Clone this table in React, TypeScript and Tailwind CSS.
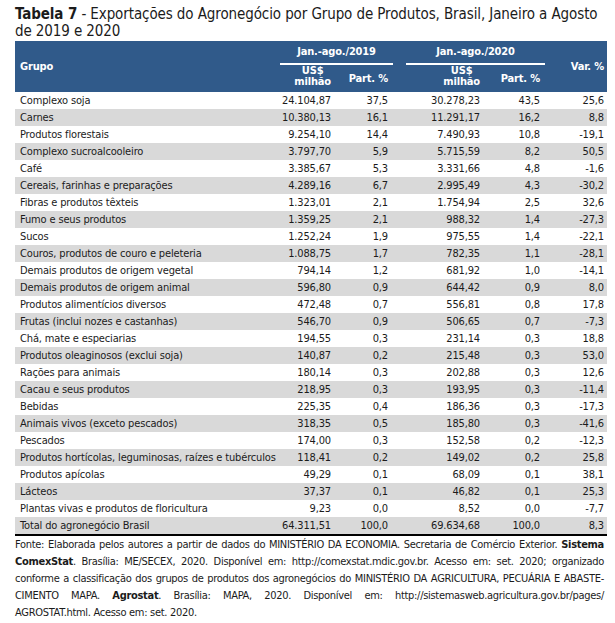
const rows: [string, string, string, string, string, string][] = [
  ["Complexo soja", "24.104,87", "37,5", "30.278,23", "43,5", "25,6"],
  ["Carnes", "10.380,13", "16,1", "11.291,17", "16,2", "8,8"],
  ["Produtos florestais", "9.254,10", "14,4", "7.490,93", "10,8", "-19,1"],
  ["Complexo sucroalcooleiro", "3.797,70", "5,9", "5.715,59", "8,2", "50,5"],
  ["Café", "3.385,67", "5,3", "3.331,66", "4,8", "-1,6"],
  ["Cereais, farinhas e preparações", "4.289,16", "6,7", "2.995,49", "4,3", "-30,2"],
  ["Fibras e produtos têxteis", "1.323,01", "2,1", "1.754,94", "2,5", "32,6"],
  ["Fumo e seus produtos", "1.359,25", "2,1", "988,32", "1,4", "-27,3"],
  ["Sucos", "1.252,24", "1,9", "975,55", "1,4", "-22,1"],
  ["Couros, produtos de couro e peleteria", "1.088,75", "1,7", "782,35", "1,1", "-28,1"],
  ["Demais produtos de origem vegetal", "794,14", "1,2", "681,92", "1,0", "-14,1"],
  ["Demais produtos de origem animal", "596,80", "0,9", "644,42", "0,9", "8,0"],
  ["Produtos alimentícios diversos", "472,48", "0,7", "556,81", "0,8", "17,8"],
  ["Frutas (inclui nozes e castanhas)", "546,70", "0,9", "506,65", "0,7", "-7,3"],
  ["Chá, mate e especiarias", "194,55", "0,3", "231,14", "0,3", "18,8"],
  ["Produtos oleaginosos (exclui soja)", "140,87", "0,2", "215,48", "0,3", "53,0"],
  ["Rações para animais", "180,14", "0,3", "202,88", "0,3", "12,6"],
  ["Cacau e seus produtos", "218,95", "0,3", "193,95", "0,3", "-11,4"],
  ["Bebidas", "225,35", "0,4", "186,36", "0,3", "-17,3"],
  ["Animais vivos (exceto pescados)", "318,35", "0,5", "185,80", "0,3", "-41,6"],
  ["Pescados", "174,00", "0,3", "152,58", "0,2", "-12,3"],
  ["Produtos hortícolas, leguminosas, raízes e tubérculos", "118,41", "0,2", "149,02", "0,2", "25,8"],
  ["Produtos apícolas", "49,29", "0,1", "68,09", "0,1", "38,1"],
  ["Lácteos", "37,37", "0,1", "46,82", "0,1", "25,3"],
  ["Plantas vivas e produtos de floricultura", "9,23", "0,0", "8,52", "0,0", "-7,7"],
]

const total = ["Total do agronegócio Brasil", "64.311,51", "100,0", "69.634,68", "100,0", "8,3"]

function DataRow({ r, gray, isTotal }: { r: string[]; gray: boolean; isTotal?: boolean }) {
  return (
    <div
      className={`grid grid-cols-[263px_58px_64px_84px_64px_59px] h-[17px] leading-[17px] ${
        gray ? "bg-[#d9d9d9]" : "bg-white"
      } ${isTotal ? "border-b-2 border-black box-content" : ""}`}
    >
      <div className="pl-[5px] whitespace-nowrap overflow-hidden">{r[0]}</div>
      <div className="text-right pr-[5px]">{r[1]}</div>
      <div className="text-right pr-[12px]">{r[2]}</div>
      <div className="text-right pr-[4px]">{r[3]}</div>
      <div className="text-right pr-[8px]">{r[4]}</div>
      <div className="text-right pr-[3px]">{r[5]}</div>
    </div>
  )
}

function UsdHead({ pr }: { pr: string }) {
  return (
    <div className={`flex justify-end ${pr}`}>
      <div className="text-center leading-[11px]">
        US$
        <br />
        milhão
      </div>
    </div>
  )
}

export default function App() {
  return (
    <div className="w-[615px] h-[623px] overflow-hidden bg-white text-[#1b1b1b] px-[15px] pt-[6px] font-['DejaVu_Sans_Condensed','DejaVu_Sans',sans-serif] text-[11px] tracking-[-0.15px] leading-[17px]">
      {/* Título */}
      <h1 className="text-[15px] leading-[17px] tracking-[-0.1px] w-[592px]">
        <span className="font-bold">Tabela 7</span> - Exportações do Agronegócio por Grupo de Produtos, Brasil, Janeiro a Agosto de 2019 e 2020
      </h1>

      <div className="mt-px w-[592px]">
        {/* Cabeçalho */}
        <div className="flex h-[51px] bg-[#305a8a] text-white font-bold">
          <div className="w-[263px] flex items-center pl-[5px]">Grupo</div>
          <div className="w-[122px] flex flex-col">
            <div className="h-[24px] pt-px">
              <div className="ml-[2px] mr-[7px] h-[23px] border-b-2 border-white text-center leading-[20px]">
                Jan.-ago./2019
              </div>
            </div>
            <div className="flex flex-1">
              <div className="w-[58px]">
                <UsdHead pr="pr-[5px]" />
              </div>
              <div className="w-[64px] flex items-center justify-end pr-[12px]">Part. %</div>
            </div>
          </div>
          <div className="w-[148px] flex flex-col">
            <div className="h-[24px] pt-px">
              <div className="ml-[6px] mr-[3px] h-[23px] border-b-2 border-white text-center leading-[20px]">
                Jan.-ago./2020
              </div>
            </div>
            <div className="flex flex-1">
              <div className="w-[84px]">
                <UsdHead pr="pr-[4px]" />
              </div>
              <div className="w-[64px] flex items-center justify-end pr-[8px]">Part. %</div>
            </div>
          </div>
          <div className="w-[59px] flex items-center justify-end pr-[3px]">Var. %</div>
        </div>

        {/* Linhas */}
        {rows.map((r, i) => (
          <DataRow key={r[0]} r={r} gray={i % 2 === 1} />
        ))}
        <DataRow r={total} gray isTotal />
      </div>

      {/* Fonte */}
      <div className="w-[589px] tracking-[-0.3px]">
        <div className="text-justify [text-align-last:justify]">
          Fonte: Elaborada pelos autores a partir de dados do MINISTÉRIO DA ECONOMIA. Secretaria de Comércio Exterior. <b>Sistema</b>
        </div>
        <div className="text-justify [text-align-last:justify]">
          <b>ComexStat</b>. Brasília: ME/SECEX, 2020. Disponível em: http://comexstat.mdic.gov.br. Acesso em: set. 2020; organizado
        </div>
        <div className="text-justify [text-align-last:justify]">
          conforme a classificação dos grupos de produtos dos agronegócios do MINISTÉRIO DA AGRICULTURA, PECUÁRIA E ABASTE-
        </div>
        <div className="text-justify [text-align-last:justify]">
          CIMENTO MAPA. <b>Agrostat</b>. Brasília: MAPA, 2020. Disponível em: http://sistemasweb.agricultura.gov.br/pages/
        </div>
        <div>AGROSTAT.html. Acesso em: set. 2020.</div>
      </div>
    </div>
  )
}
